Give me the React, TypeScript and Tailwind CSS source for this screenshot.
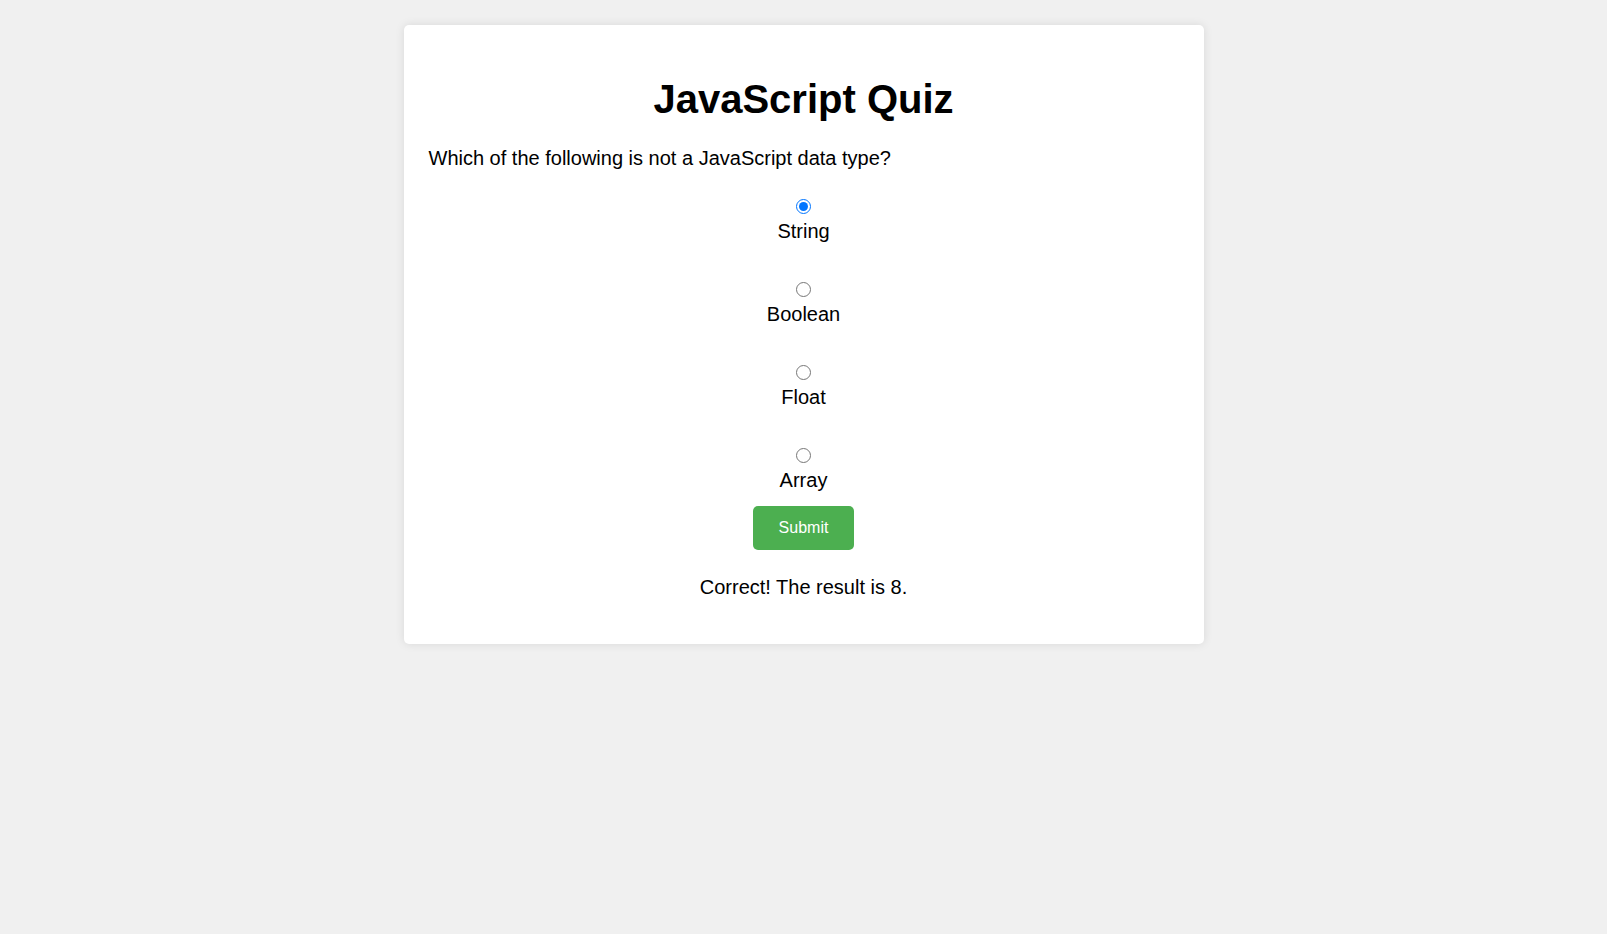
import React, { useState } from "react";

const options = ["String", "Boolean", "Float", "Array"];

export default function App() {
  const [sel, setSel] = useState("String");
  return (
    <div className="min-h-screen bg-[#f0f0f0] pt-[25px] pb-[20px]" style={{ fontFamily: '"Liberation Sans", Arial, sans-serif' }}>
      <div className="mx-auto w-[800px] rounded-[5px] bg-white px-[25px] pt-[25px] pb-[45px] shadow-[0_0_10px_rgba(0,0,0,0.1)]">
        <h1 className="mt-[26px] text-center text-[40px] font-bold leading-[46px] text-black">JavaScript Quiz</h1>
        <p className="mt-[25px] text-[20px] leading-[23px] text-black">Which of the following is not a JavaScript data type?</p>
        <div className="mt-[29px] flex flex-col items-center">
          {options.map((o, i) => (
            <label key={o} className={`flex flex-col items-center ${i > 0 ? "mt-[39px]" : ""}`}>
              <input
                type="radio"
                name="q"
                checked={sel === o}
                onChange={() => setSel(o)}
                className="m-0 h-[15px] w-[15px]"
              />
              <span className="mt-[6px] text-[20px] leading-[23px] text-black">{o}</span>
            </label>
          ))}
        </div>
        <div className="mt-[14px] flex justify-center">
          <button className="h-[44px] w-[101px] rounded-[5px] bg-[#4caf50] text-[16px] text-white">Submit</button>
        </div>
        <p className="mt-[26px] text-center text-[20px] leading-[23px] text-black">Correct! The result is 8.</p>
      </div>
    </div>
  );
}
